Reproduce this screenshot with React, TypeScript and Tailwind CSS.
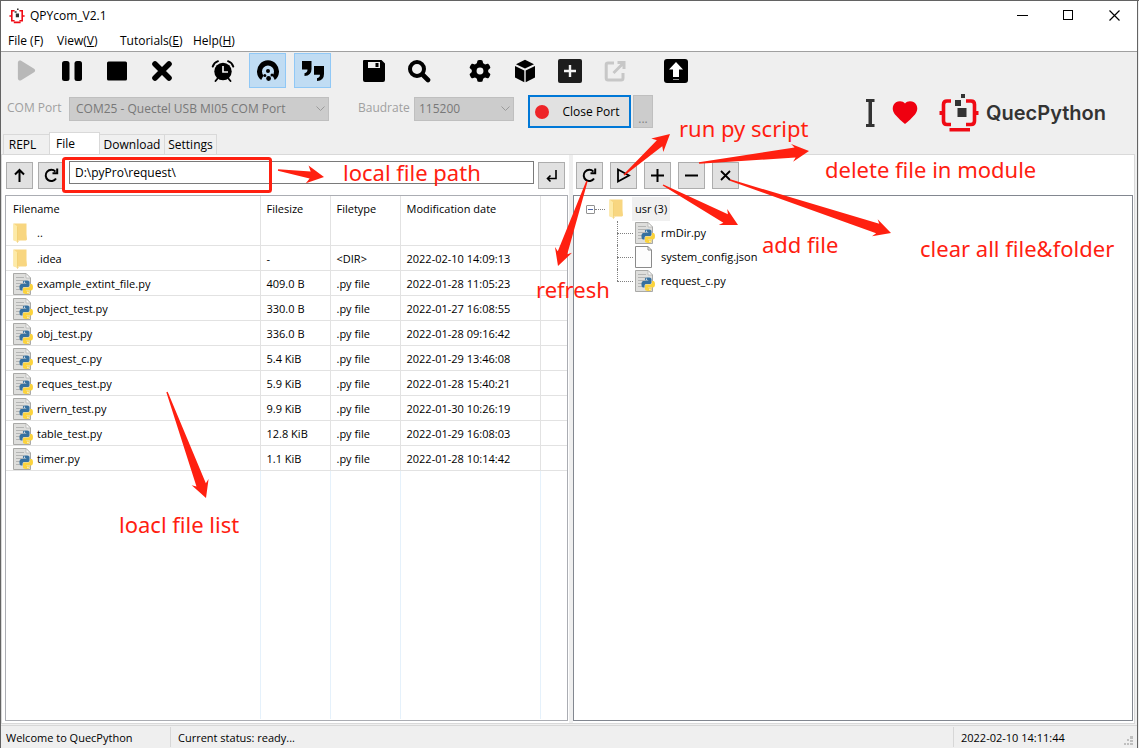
import React from "react";
import { FaGear, FaPlay } from "react-icons/fa6";

const files = [
  { name: "..", size: "", type: "", date: "", folder: true },
  { name: ".idea", size: "-", type: "<DIR>", date: "2022-02-10 14:09:13", folder: true },
  { name: "example_extint_file.py", size: "409.0 B", type: ".py file", date: "2022-01-28 11:05:23" },
  { name: "object_test.py", size: "330.0 B", type: ".py file", date: "2022-01-27 16:08:55" },
  { name: "obj_test.py", size: "336.0 B", type: ".py file", date: "2022-01-28 09:16:42" },
  { name: "request_c.py", size: "5.4 KiB", type: ".py file", date: "2022-01-29 13:46:08" },
  { name: "reques_test.py", size: "5.9 KiB", type: ".py file", date: "2022-01-28 15:40:21" },
  { name: "rivern_test.py", size: "9.9 KiB", type: ".py file", date: "2022-01-30 10:26:19" },
  { name: "table_test.py", size: "12.8 KiB", type: ".py file", date: "2022-01-29 16:08:03" },
  { name: "timer.py", size: "1.1 KiB", type: ".py file", date: "2022-01-28 10:14:42" },
];

const SNAKE =
  "M14.25.18l.9.2.73.26.59.3.45.32.34.34.25.34.16.33.1.3.04.26.02.2-.01.13V8.5l-.05.63-.13.55-.21.46-.26.38-.3.31-.33.25-.35.19-.35.14-.33.1-.3.07-.26.04-.21.02H8.77l-.69.05-.59.14-.5.22-.41.27-.33.32-.27.35-.2.36-.15.37-.1.35-.07.32-.04.27-.02.21v3.06H3.17l-.21-.03-.28-.07-.32-.12-.35-.18-.36-.26-.36-.36-.35-.46-.32-.59-.28-.73-.21-.88-.14-1.05-.05-1.23.06-1.22.16-1.04.24-.87.32-.71.36-.57.4-.44.42-.33.42-.24.4-.16.36-.1.32-.05.24-.01h.16l.06.01h8.16v-.83H6.18l-.01-2.75-.02-.37.05-.34.11-.31.17-.28.25-.26.31-.23.38-.2.44-.18.51-.15.58-.12.64-.1.71-.06.77-.04.84-.02 1.27.05z";

function PyIcon() {
  return (
    <svg width="20" height="22" viewBox="0 0 20 22" className="shrink-0">
      <path d="M0.5 0.5H13L17.5 5V21.5H0.5Z" fill="#dededc" stroke="#a9a9a7" />
      <path d="M13 0.5V5H17.5Z" fill="#f8f8f8" stroke="#b0b0ae" strokeWidth=".7" />
      <path d="M3 4.5H11M3 7.5H11M3 10.5H10M3 13.5H7M3 16.5H7" stroke="#b4b5b4" />
      <g transform="translate(6.5 7.5) scale(.56)">
        <path d={SNAKE} fill="#36709f" />
        <circle cx="8.9" cy="3" r="1.2" fill="#fff" />
        <g transform="rotate(180 12 12)">
          <path d={SNAKE} fill="#fbd33c" />
          <circle cx="8.9" cy="3" r="1.2" fill="#fff" />
        </g>
      </g>
    </svg>
  );
}

function FolderIcon() {
  return (
    <svg width="15" height="20" viewBox="0 0 15 20" className="shrink-0">
      <path d="M0.5 0.5H13.5V11L14 16.5L13 17.5H0.5Z" fill="#f8d680" />
      <path d="M0.5 0.5L4.5 3.5V19.5L0.5 16.8Z" fill="#fdeaa7" />
      <path d="M4.5 3.5V19.5L6 17.5" fill="none" stroke="#eec865" strokeWidth=".6" />
    </svg>
  );
}

function PageIcon() {
  return (
    <svg width="20" height="22" viewBox="0 0 20 22" className="shrink-0">
      <path d="M0.5 0.5H13L16.5 4V21.5H0.5Z" fill="#fdfdfd" stroke="#8a8a8a" />
      <path d="M13 0.5V4H16.5" fill="none" stroke="#8a8a8a" />
    </svg>
  );
}

function Ic({ children, size = 24 }: { children: React.ReactNode; size?: number }) {
  return (
    <svg width={size} height={size} viewBox="0 0 24 24" fill="currentColor">
      {children}
    </svg>
  );
}

const groups: { label: string; active?: boolean; disabled?: boolean; icon: React.ReactNode }[][] = [
  [
    { label: "Run", disabled: true, icon: <FaPlay size={23} /> },
    {
      label: "Pause",
      icon: (
        <Ic>
          <rect x="2" y="2" width="7.5" height="20" rx="2.5" />
          <rect x="14.5" y="2" width="7.5" height="20" rx="2.5" />
        </Ic>
      ),
    },
    { label: "Stop", icon: <Ic><rect x="2" y="2.5" width="20" height="19" rx="1.5" /></Ic> },
    {
      label: "Clear",
      icon: <Ic><path d="M5 5L19 19M19 5L5 19" stroke="currentColor" strokeWidth="5.6" strokeLinecap="round" /></Ic>,
    },
  ],
  [
    {
      label: "Timer",
      icon: (
        <Ic>
          <circle cx="12" cy="12.5" r="8.7" />
          <path d="M12 7V13H17" stroke="#efefef" strokeWidth="1.7" fill="none" />
          <path d="M1.7 7.6Q3 3.5 7 2.2M22.3 7.6Q21 3.5 17 2.2M7 19L4.5 22M17 19L19.5 22" fill="none" stroke="currentColor" strokeWidth="1.9" strokeLinecap="round" />
        </Ic>
      ),
    },
    {
      label: "Monitor",
      active: true,
      icon: (
        <Ic>
          <path d="M5.2 21A11 11 0 1 1 18.8 21L16.5 16.500A6 6 0 1 0 7.500 16.500Z" />
          <circle cx="12" cy="12" r="2" />
          <circle cx="8.8" cy="16.4" r="1.5" />
          <circle cx="12.6" cy="19.5" r="2.4" />
          <circle cx="16" cy="16" r="1.5" />
        </Ic>
      ),
    },
    {
      label: "Quotes",
      active: true,
      icon: (
        <Ic>
          <path d="M1 2H10.5V10Q10.5 16.5 3.5 17V14.2Q6.5 13.6 6.5 10.5H1Z" />
          <path d="M13 7H23V15Q23 21.5 16 22V19.2Q19 18.6 19 15.8H13Z" />
        </Ic>
      ),
    },
  ],
  [
    {
      label: "Save",
      icon: (
        <Ic>
          <path fillRule="evenodd" d="M2 1H19.5L23 4.5V21Q23 23 21 23H3Q1 23 1 21V2Q1 1 2 1ZM6 3V9H18V3ZM13.5 4H16.5V8H13.5Z" />
        </Ic>
      ),
    },
    {
      label: "Search",
      icon: (
        <Ic>
          <circle cx="10" cy="10" r="7" fill="none" stroke="currentColor" strokeWidth="4" />
          <path d="M15.5 15.5L21 21" stroke="currentColor" strokeWidth="4.6" strokeLinecap="round" />
        </Ic>
      ),
    },
  ],
  [
    { label: "Options", icon: <FaGear size={22} /> },
    {
      label: "Package",
      icon: (
        <Ic>
          <path d="M12 .8L21 5.2L12 9.6L3 5.2Z" />
          <path d="M2 7L11.3 11.4V23.2L2 18.6Z" />
          <path d="M22 7L12.7 11.4V23.2L22 18.6Z" />
        </Ic>
      ),
    },
    {
      label: "Add",
      icon: (
        <Ic>
          <rect width="24" height="24" rx="2" fill="#1d1d1d" />
          <path d="M12 6V18M6 12H18" stroke="#f4f4f4" strokeWidth="2.4" />
        </Ic>
      ),
    },
    {
      label: "Export",
      disabled: true,
      icon: (
        <Ic>
          <path d="M11 4H5Q3.2 4 3.2 5.8V19Q3.2 21 5 21H18.2Q20 21 20 19V14M10.5 14L20 4.5M14.5 3.5H21V10" fill="none" stroke="#c7c7c7" strokeWidth="3" />
        </Ic>
      ),
    },
  ],
  [
    {
      label: "Upload",
      icon: (
        <Ic>
          <rect width="24" height="24" rx="3" />
          <path d="M12 3L19 10.5H15V18H9V10.5H5Z" fill="#fff" />
          <path d="M9 20.5H15" stroke="#999" />
        </Ic>
      ),
    },
  ],
];

function ToolButton({ label, children }: { label: string; children: React.ReactNode }) {
  return (
    <button aria-label={label} className="flex size-[27px] shrink-0 items-center justify-center border border-[#adadad] bg-[#e1e1e1] text-black">
      {children}
    </button>
  );
}

function Glyph({ d, w = 2 }: { d: string; w?: number }) {
  return (
    <svg width="17" height="17" viewBox="0 0 17 17" fill="none" stroke="currentColor" strokeWidth={w}>
      <path d={d} />
    </svg>
  );
}

const RELOAD = "M13 11.5A5.6 5.6 0 1 1 12.4 4.6M14.2 1.5V6.2H9.5";

function Brand() {
  return (
    <svg width="40" height="40" viewBox="0 0 40 40" aria-hidden="true">
      <g fill="none" stroke="#ef0a14" strokeWidth="3.6">
        <path d="M12 8H8Q4.500 8 4.500 11.500V28Q4.500 31.500 8 31.500H12" />
        <path d="M27 8H32Q35.500 8 35.500 11.500V28Q35.500 31.500 32 31.500H27" />
      </g>
      <path d="M.5 18H4V22H.5ZM36 18H39.5V22H36ZM10.500 35H31V38.500H10.500Z" fill="#ef0a14" />
      <path d="M18.500 15H27.500V24H18.500ZM16 7H22V13H16ZM22 1H26V5H22Z" fill="#333" />
    </svg>
  );
}

function arrow(x1: number, y1: number, x2: number, y2: number) {
  const len = Math.hypot(x2 - x1, y2 - y1);
  const ux = (x2 - x1) / len;
  const uy = (y2 - y1) / len;
  const half = Math.min(5, 2 + len / 30);
  const outline = [
    [0, -0.7],
    [len - 14, -half],
    [len - 17, -9],
    [len, 0],
    [len - 17, 9],
    [len - 14, half],
    [0, 0.7],
  ];
  return outline.map(([a, b]) => `${x1 + a * ux - b * uy},${y1 + a * uy + b * ux}`).join(" ");
}

const arrows = [
  [278, 170, 324, 177],
  [624, 175, 670, 134],
  [699, 163, 809, 151],
  [663, 185, 738, 225],
  [730, 180, 891, 233],
  [587, 181, 558, 266],
  [167, 392, 206, 498],
];

function Annotations() {
  return (
    <div className="pointer-events-none absolute -top-px right-0 bottom-0 -left-px font-['Noto_Sans','Open_Sans',sans-serif] text-[22px] leading-7 whitespace-nowrap text-[#ff2010]">
      <svg className="absolute inset-0 h-full w-full" fill="#ff2010">
        <rect x="63.500" y="158.500" width="207" height="33" rx="2" fill="none" stroke="#ff2010" strokeWidth="3" />
        {arrows.map(([a, b, c, d]) => (
          <polygon key={`${a}-${b}`} points={arrow(a, b, c, d)} />
        ))}
      </svg>
      <span className="absolute top-[158px] left-[343px]">local file path</span>
      <span className="absolute top-[114px] left-[679px]">run py script</span>
      <span className="absolute top-[155px] left-[825px]">delete file in module</span>
      <span className="absolute top-[230px] left-[762px]">add file</span>
      <span className="absolute top-[234px] left-[920px]">clear all file&amp;folder</span>
      <span className="absolute top-[275px] left-[536px]">refresh</span>
      <span className="absolute top-[510px] left-[119px]">loacl file list</span>
    </div>
  );
}

function TreeLeaf({ name, icon, last }: { name: string; icon: React.ReactNode; last?: boolean }) {
  return (
    <li className="flex h-6 items-center">
      <span className="relative h-6 w-[18px] shrink-0">
        <span className={`absolute top-0 left-0 border-l border-dotted border-[#808080] ${last ? "h-3" : "h-6"}`} />
        <span className="absolute top-3 left-0 w-4 border-t border-dotted border-[#808080]" />
      </span>
      {icon}
      <span className="pl-[6px]">{name}</span>
    </li>
  );
}

export default function App() {
  return (
    <div className="relative flex h-screen flex-col overflow-hidden border-t border-l border-[#636363] bg-[#efefef] pr-px font-['Open_Sans','Noto_Sans',sans-serif] text-[12px] leading-4 text-black">
      <div className="flex min-h-0 flex-1 flex-col border-r border-[#636363]">
        <header className="flex h-[29px] shrink-0 items-center bg-white pl-2">
          <svg width="16" height="16" viewBox="0 0 40 40" className="mr-[5px]">
            <g fill="none" stroke="#ef0a14" strokeWidth="4">
              <path d="M14 7H7V32H14M26 7H33V32H26" />
            </g>
            <path d="M1 18H6V22H1ZM34 18H39V22H34ZM12 34H29V38H12Z" fill="#ef0a14" />
            <path d="M17 14H25V23H17ZM14 8H19V12H14ZM20 1H24V5H20Z" fill="#333" />
          </svg>
          <h1 className="flex-1">QPYcom_V2.1</h1>
          <button aria-label="Minimize" className="flex h-full w-[45px] items-center justify-center">
            <svg width="11" height="11"><path d="M0 5.500H11" stroke="#000" /></svg>
          </button>
          <button aria-label="Maximize" className="flex h-full w-[46px] items-center justify-center">
            <svg width="11" height="11"><rect x=".5" y=".5" width="9" height="9" fill="none" stroke="#000" /></svg>
          </button>
          <button aria-label="Close" className="flex h-full w-[46px] items-center justify-center">
            <svg width="11" height="11"><path d="M.5 .5L10.500 10.500M10.500 .5L.5 10.500" stroke="#000" strokeWidth="1.200" /></svg>
          </button>
        </header>
        <nav className="flex h-[22px] shrink-0 items-center border-b border-[#a0a0a0] bg-white pl-[7px]">
          <button className="w-[49px] text-left">File (F)</button>
          <button className="w-[63px] text-left">View(<u>V</u>)</button>
          <button className="w-[73px] text-left">Tutorials(<u>E</u>)</button>
          <button>Help(<u>H</u>)</button>
        </nav>

        <div className="flex h-10 shrink-0 items-start gap-6 pt-px pl-[7px]">
          {groups.map((g, i) => (
            <div key={i} className="flex gap-2">
              {g.map((t) => (
                <button
                  key={t.label}
                  aria-label={t.label}
                  disabled={t.disabled}
                  className={`flex h-[35px] w-[37px] items-center justify-center border ${t.active ? "border-[#90c8f6] bg-[#c0dcf3]" : "border-transparent"} ${t.disabled ? "text-[#b8b8b8]" : "text-black"}`}
                >
                  {t.icon}
                </button>
              ))}
            </div>
          ))}
        </div>

        <div className="flex h-10 shrink-0 items-start pl-[6px]">
          <label htmlFor="port" className="mt-2 w-[62px] text-[#a0a0a0]">COM Port</label>
          <div className="relative mt-[5px]">
            <select id="port" disabled className="h-6 w-[260px] appearance-none border border-[#bfbfbf] bg-[#cccccc] pl-[6px] text-[#787878] opacity-100">
              <option>COM25 - Quectel USB MI05 COM Port</option>
            </select>
            <svg width="9" height="6" className="absolute top-[9px] right-1"><path d="M.5 .5L4.500 4.500L8.500 .5" fill="none" stroke="#9a9a9a" /></svg>
          </div>
          <label htmlFor="baud" className="mt-2 ml-[29px] w-[56px] text-[#a0a0a0]">Baudrate</label>
          <div className="relative mt-[5px]">
            <select id="baud" disabled className="h-6 w-[100px] appearance-none border border-[#bfbfbf] bg-[#cccccc] pl-1 text-[#787878] opacity-100">
              <option>115200</option>
            </select>
            <svg width="9" height="6" className="absolute top-[9px] right-1"><path d="M.5 .5L4.500 4.500L8.500 .5" fill="none" stroke="#9a9a9a" /></svg>
          </div>
          <button className="mt-[3px] ml-[14px] flex h-[33px] w-[103px] items-center border-2 border-[#0078d7] bg-[#e1e1e1] pl-[5px]">
            <span className="size-[14px] rounded-full bg-[#ee2428]" />
            <span className="flex-1 pl-1 text-center">Close Port</span>
          </button>
          <button disabled className="mt-[3px] ml-[2px] flex h-[33px] w-5 items-end justify-center border border-[#bfbfbf] bg-[#cccccc] text-[#838383]">...</button>
          <div className="mt-px ml-auto flex items-center pr-[31px]">
            <svg width="9" height="28" viewBox="0 0 9 28" className="mr-[17px]"><path d="M0 0H8.500V3H6V25H8.500V28H0V25H2.500V3H0Z" fill="#333" /></svg>
            <svg width="26" height="24" viewBox="0 0 26 24" className="mr-[21px]">
              <path d="M13 2.500C15-.3 19.500-.2 22 1.300C26 4 26.300 9.500 23 13.500C20 17 16 20.500 13 23C10 20.500 6 17 3 13.500C-.3 9.500 0 4 4 1.300C6.500-.2 11-.3 13 2.500Z" fill="#ef0010" />
            </svg>
            <Brand />
            <span className="pl-[7px] font-['Inter',sans-serif] text-[20px] leading-7 font-semibold text-[#333]">QuecPython</span>
          </div>
        </div>

        <div role="tablist" className="flex h-[22px] shrink-0 items-end pl-[2px]">
          <button role="tab" className="h-5 w-[46px] border-t border-l border-[#d9d9d9] bg-[#f0f0f0] pr-2">REPL</button>
          <button role="tab" aria-selected className="h-[22px] w-[51px] border-x border-t border-[#d9d9d9] bg-white pr-[18px]">File</button>
          <button role="tab" className="h-5 w-[65px] border-t border-r border-[#d9d9d9] bg-[#f0f0f0]">Download</button>
          <button role="tab" className="h-5 w-[52px] border-t border-r border-[#d9d9d9] bg-[#f0f0f0]">Settings</button>
        </div>

        <main className="mr-[2px] grid min-h-0 flex-1 grid-cols-[567fr_4px_561fr] border border-[#d9d9d9] bg-white">
          <section className="flex min-h-0 min-w-0 flex-col pr-px pl-[3px]">
            <div className="flex h-10 shrink-0 items-start pt-[7px] pl-px">
              <ToolButton label="Parent folder">
                <Glyph d="M8.500 15V3M4 7.500L8.500 3L13 7.500" />
              </ToolButton>
              <span className="w-[5px]" />
              <ToolButton label="Reload local files">
                <Glyph d={RELOAD} />
              </ToolButton>
              <input aria-label="Local path" defaultValue="D:\pyPro\request\" className="-mt-px ml-1 h-[23px] min-w-0 flex-1 border border-[#7a7a7a] bg-white px-[5px] pb-px outline-none" />
              <span className="w-1" />
              <ToolButton label="Go">
                <Glyph d="M13 3V11.500H4.500M7.500 8.500L4.500 11.500L7.500 14.500" w={1.6} />
              </ToolButton>
              <span className="w-[3px]" />
            </div>
            <div className="mb-[2px] flex min-h-0 flex-1 flex-col border border-[#abadb3] text-[11px]">
              <table className="w-full table-fixed border-collapse text-left">
                <colgroup>
                  <col />
                  <col className="w-[70px]" />
                  <col className="w-[70px]" />
                  <col className="w-[140px]" />
                  <col className="w-[27px]" />
                </colgroup>
                <thead>
                  <tr className="h-6">
                    <th className="border-r border-[#e2e2e2] pt-[2px] pb-0 pl-[7px] font-normal">Filename</th>
                    <th className="border-r border-[#e2e2e2] pt-[2px] pb-0 pl-[6px] font-normal">Filesize</th>
                    <th className="border-r border-[#e2e2e2] pt-[2px] pb-0 pl-[6px] font-normal">Filetype</th>
                    <th className="border-r border-[#e2e2e2] pt-[2px] pb-0 pl-[6px] font-normal">Modification date</th>
                    <th className="p-0" />
                  </tr>
                </thead>
                <tbody>
                  {files.map((f) => (
                    <tr key={f.name} className="h-[25px] border-b border-[#e2e2e2]">
                      <td className="border-r border-[#e2e2e2] pt-[2px] pb-0 pl-[7px]">
                        <span className="flex h-[22px] items-center">
                          <span className="w-6 shrink-0">{f.folder ? <FolderIcon /> : <PyIcon />}</span>
                          {f.name}
                        </span>
                      </td>
                      <td className="border-r border-[#e2e2e2] pt-[2px] pb-0 pl-[6px]">{f.size}</td>
                      <td className="border-r border-[#e2e2e2] pt-[2px] pb-0 pl-[6px]">{f.type}</td>
                      <td className="border-r border-[#e2e2e2] pt-[2px] pb-0 pl-[6px]">{f.date}</td>
                      <td className="p-0" />
                    </tr>
                  ))}
                </tbody>
              </table>
              <div className="grid flex-1 grid-cols-[1fr_70px_70px_140px_27px] pb-px">
                <span />
                <span className="border-l border-[#e5f1fb]" />
                <span className="border-l border-[#e5f1fb]" />
                <span className="border-l border-[#e5f1fb]" />
                <span className="border-l border-[#e5f1fb]" />
              </div>
            </div>
          </section>

          <div className="bg-[#efefef]" />

          <section className="flex min-h-0 min-w-0 flex-col pr-px">
            <div className="flex h-10 shrink-0 items-start gap-[7px] pt-[7px] pl-[3px]">
              <ToolButton label="Refresh"><Glyph d={RELOAD} /></ToolButton>
              <ToolButton label="Run script"><Glyph d="M3 2.500L14 8.500L3 14.500Z" w={1.8} /></ToolButton>
              <ToolButton label="Add file"><Glyph d="M8.500 2V15M2 8.500H15" /></ToolButton>
              <ToolButton label="Delete file"><Glyph d="M2 8.500H15" /></ToolButton>
              <ToolButton label="Clear all"><Glyph d="M4 4L13 13M13 4L4 13" w={1.8} /></ToolButton>
            </div>
            <div className="mb-[2px] min-h-0 flex-1 border border-[#828790] pl-3 text-[11px]">
              <div className="flex h-[25px] items-center pt-px">
                <button aria-label="Collapse usr" className="flex size-[9px] items-center justify-center rounded-[1px] border border-[#919191] bg-white">
                  <span className="h-px w-[5px] bg-[#4b63a7]" />
                </button>
                <span className="mr-1 w-[10px] border-t border-dotted border-[#808080]" />
                <FolderIcon />
                <span className="ml-2 flex h-6 items-center bg-[#f0f0f0] px-[3px]">usr (3)</span>
              </div>
              <ul className="pl-[31px]">
                <TreeLeaf name="rmDir.py" icon={<PyIcon />} />
                <TreeLeaf name="system_config.json" icon={<PageIcon />} />
                <TreeLeaf name="request_c.py" icon={<PyIcon />} last />
              </ul>
            </div>
          </section>
        </main>

        <footer className="mt-px flex h-[23px] shrink-0 items-center border-t border-[#d7d7d7] text-[11px]">
          <span className="h-5 w-[170px] border-r border-[#d7d7d7] pt-[3px] pl-[5px]">Welcome to QuecPython</span>
          <span className="h-5 flex-1 pt-[3px] pl-[7px]">Current status: ready...</span>
          <span className="h-5 w-[171px] border-l border-[#d7d7d7] pt-[3px] pl-[7px]">2022-02-10 14:11:44</span>
          <svg width="12" height="12" className="mr-px self-end" fill="#bfbfbf">
            <path d="M6 0H9V3H6ZM3 3H5V5H3ZM6 4H9V6H6ZM0 7H2V9H0ZM3 7H5V9H3ZM6 7H9V9H6Z" />
          </svg>
        </footer>
      </div>
      <Annotations />
    </div>
  );
}
